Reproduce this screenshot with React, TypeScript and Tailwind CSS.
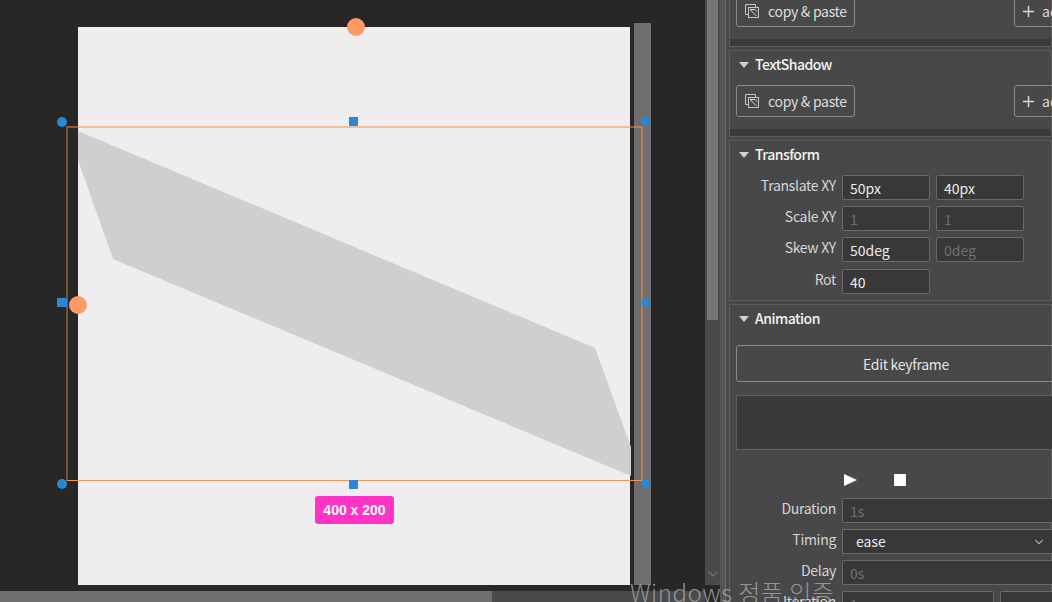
import { Plus, ChevronDown } from "lucide-react";

const font = { fontFamily: '"Noto Sans CJK KR", "Noto Sans", sans-serif' };

function CopyIcon() {
  return (
    <svg width="16" height="16" viewBox="0 0 16 16" fill="none" stroke="#c4c4c4" strokeWidth="1" className="shrink-0">
      <path d="M4.5 11.5H1.5V1.5H11.5V4.5" />
      <rect x="4.5" y="4.5" width="10" height="10" />
      <path d="M6 6.5h5l2 2M6.5 7l6 6" stroke="#dddddd" />
    </svg>
  );
}

function SectionTitle({ title }: { title: string }) {
  return (
    <div className="flex items-center gap-[6px] pl-[9px] h-[22px]">
      <span className="w-0 h-0 border-x-[5px] border-x-transparent border-t-[6px] border-t-[#d0d0d0]" />
      <span className="text-[14px] font-medium text-[#f2f2f2] tracking-[-0.5px] pb-[2px]">{title}</span>
    </div>
  );
}

function CopyRow() {
  return (
    <div className="flex pl-[6px]">
      <button className="flex items-center gap-[8px] w-[119px] h-[32px] pl-[7px] border border-[#8a8a8a] rounded-[3px] text-[14px] text-[#dedede] tracking-[-0.3px] shrink-0">
        <CopyIcon />
        copy & paste
      </button>
      <button className="flex items-center gap-[5px] w-[60px] ml-[159px] h-[32px] pl-[5px] border border-[#8a8a8a] rounded-[3px] text-[14px] text-[#dedede] shrink-0 overflow-hidden">
        <Plus size={17} strokeWidth={2} className="shrink-0" />
        add
      </button>
    </div>
  );
}

function Field({ value, dim, w = "w-[88px]" }: { value?: string; dim?: boolean; w?: string }) {
  return (
    <div
      className={`${w} h-[25px] pl-[7px] border border-[#6a6a6a] rounded-[2px] bg-[#383838] text-[14px] leading-[25px] shrink-0 ${dim ? "text-[#6f6f6f]" : "text-[#ececec]"}`}
    >
      {value}
    </div>
  );
}

function Row({ label, children, mt = "mt-[6px]" }: { label: string; children: React.ReactNode; mt?: string }) {
  return (
    <div className={`flex items-start gap-[6px] ${mt}`}>
      <div className="w-[106px] text-right text-[14px] leading-[20px] text-[#d6d6d6] tracking-[-0.3px] shrink-0">{label}</div>
      {children}
    </div>
  );
}

function Handle({ className }: { className: string }) {
  return <div className={`absolute bg-[#2a87d4] ${className}`} />;
}

function Canvas() {
  return (
    <div className="relative w-[705px] h-[585px] shrink-0 bg-[#272727] overflow-hidden">
      <div className="absolute left-[634px] top-[23px] w-[17px] h-[562px] bg-[#6f6f6f]" />
      <div className="absolute left-[78px] top-[27px] w-[552px] h-[558px] bg-[#eeeeee]" />
      <svg className="absolute left-[78px] top-[27px]" width="553" height="558">
        <polygon points="0,104 517,321 553,420 553,449 35,232 0,133" fill="#cfcfcf" />
      </svg>
      <div className="absolute left-[66px] top-[126px] w-[577px] h-[355px] border-2 border-t-[#ff8a45]/50 border-l-[#ff8a45]/40 border-r-[#ff8a45]/50 border-b-[#f2935a] border-b-[1px]" />
      <div className="absolute left-[347px] top-[18px] w-[18px] h-[18px] rounded-full bg-[#ff9966]" />
      <div className="absolute left-[69px] top-[296px] w-[18px] h-[18px] rounded-full bg-[#ff9966]" />
      <Handle className="left-[57px] top-[117px] w-[10px] h-[10px] rounded-full" />
      <Handle className="left-[641px] top-[117px] w-[9px] h-[9px] rounded-full" />
      <Handle className="left-[57px] top-[479px] w-[10px] h-[10px] rounded-full" />
      <Handle className="left-[641px] top-[479px] w-[9px] h-[9px] rounded-full" />
      <Handle className="left-[349px] top-[117px] w-[9px] h-[9px]" />
      <Handle className="left-[349px] top-[480px] w-[9px] h-[9px]" />
      <Handle className="left-[57px] top-[298px] w-[10px] h-[9px]" />
      <Handle className="left-[642px] top-[298px] w-[8px] h-[9px] rounded-full" />
      <div
        className="absolute left-[315px] top-[496px] w-[79px] h-[28px] rounded-[3px] bg-[#ff33c4] text-white text-[14px] font-bold text-center leading-[28px]"
        style={{ fontFamily: '"Liberation Sans", sans-serif' }}
      >
        400 x 200
      </div>
    </div>
  );
}

function Panel() {
  return (
    <div className="w-[323px] shrink-0 h-[602px] overflow-hidden bg-[#484848]">
      <div className="-mt-[6px]">
        <div className="h-[53px] border border-[#5c5c5c] bg-[#3a3a3a]">
          <div className="h-[44px] bg-[#484848]">
            <CopyRow />
          </div>
        </div>
        <div className="mt-[3px] h-[87px] border border-[#5c5c5c] bg-[#3a3a3a]">
          <div className="h-[78px] bg-[#484848] pt-[3px]">
            <SectionTitle title="TextShadow" />
            <div className="mt-[9px]">
              <CopyRow />
            </div>
          </div>
        </div>
        <div className="mt-[3px] h-[161px] border border-[#5c5c5c] bg-[#484848] pt-[3px]">
          <SectionTitle title="Transform" />
          <Row label="Translate XY" mt="mt-[9px]">
            <Field value="50px" />
            <Field value="40px" />
          </Row>
          <Row label="Scale XY">
            <Field value="1" dim />
            <Field value="1" dim />
          </Row>
          <Row label="Skew XY">
            <Field value="50deg" />
            <Field value="0deg" dim />
          </Row>
          <Row label="Rot" mt="mt-[7px]">
            <Field value="40" />
          </Row>
        </div>
        <div className="mt-[3px] h-[320px] border border-[#5c5c5c] bg-[#484848] pt-[3px] relative">
          <SectionTitle title="Animation" />
          <div className="pl-[6px] mt-[15px]">
            <button className="w-[340px] h-[37px] pt-[1px] border border-[#8a8a8a] rounded-[3px] text-[14px] text-[#e4e4e4] tracking-[-0.3px]">
              Edit keyframe
            </button>
            <div className="w-[340px] h-[55px] mt-[13px] border border-[#5f5f5f] bg-[#3a3a3a]" />
          </div>
          <div className="flex items-center pl-[114px] mt-[24px] h-[12px]">
            <span className="w-0 h-0 border-y-[6.5px] border-y-transparent border-l-[13px] border-l-white" />
            <span className="ml-[37px] w-[12px] h-[12px] bg-white" />
          </div>
          <Row label="Duration" mt="mt-[12px]">
            <Field value="1s" dim w="w-[220px]" />
          </Row>
          <Row label="Timing">
            <div className="relative w-[220px] h-[25px] pl-[13px] border border-[#6a6a6a] bg-[#383838] text-[14px] leading-[22px] text-[#ececec] shrink-0">
              ease
              <ChevronDown size={14} className="absolute left-[189px] top-[5px] text-[#a0a0a0]" />
            </div>
          </Row>
          <Row label="Delay">
            <Field value="0s" dim w="w-[220px]" />
          </Row>
          <Row label="Iteration">
            <Field value="1" dim w="w-[152px]" />
            <Field w="w-[60px]" />
          </Row>
        </div>
      </div>
    </div>
  );
}

export default function App() {
  return (
    <div className="relative w-[1052px] h-[602px] overflow-hidden flex bg-[#272727]" style={font}>
      <div className="w-[705px] shrink-0">
        <Canvas />
        <div className="h-[6px] bg-[#272727]" />
        <div className="h-[11px] bg-[#4a4a4a]">
          <div className="w-[492px] h-full bg-[#6f6f6f]" />
        </div>
      </div>
      <div className="w-[15px] shrink-0 bg-[#272727]">
        <div className="w-[15px] h-[585px] bg-[#4a4a4a] pl-[2px] relative">
          <div className="w-[11px] h-[320px] bg-[#757575]" />
          <ChevronDown size={16} className="absolute left-0 top-[566px] text-[#6e6e6e]" />
        </div>
      </div>
      <div className="w-[9px] shrink-0 flex bg-[#4a4a4a]">
        <div className="w-[5px] bg-[#555555]" />
        <div className="w-[1px] bg-[#6e6e6e]" />
      </div>
      <Panel />
      <div className="absolute left-[630px] top-[574px] text-[24px] leading-[36px] font-light text-[#b0b0b0]/75 whitespace-nowrap tracking-[0.5px]">
        Windows 정품 인증
      </div>
    </div>
  );
}
